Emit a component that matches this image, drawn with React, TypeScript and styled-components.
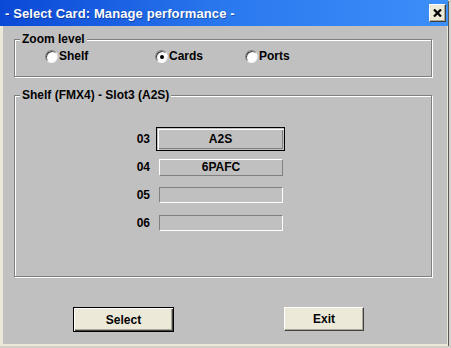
import styled, { createGlobalStyle } from "styled-components";
import { useState } from "react";

const GlobalStyle = createGlobalStyle`
  html, body {
    margin: 0;
    padding: 0;
    background: #d4d0c8;
  }
  body {
    font-family: "Liberation Sans", Arial, sans-serif;
    overflow: hidden;
  }
`;

const Window = styled.div`
  width: 448px;
  height: 346px;
  display: flex;
  flex-direction: column;
  box-shadow: 1px 1px 0 #5a5a5a;
`;

const TitleBar = styled.div`
  height: 26px;
  flex: none;
  display: flex;
  align-items: center;
  justify-content: space-between;
  padding: 0 2px 0 5px;
  background: linear-gradient(to right, #0a48d6 0%, #2a78ee 50%, #3d8ffa 100%);
`;

const TitleText = styled.span`
  color: #ffffff;
  font-weight: bold;
  font-size: 13px;
  letter-spacing: 0.1px;
  text-shadow: 1px 1px 0 rgba(0, 0, 60, 0.35);
`;

const CloseButton = styled.div`
  width: 17px;
  height: 18px;
  box-sizing: border-box;
  background: #ece9d8;
  border: 1px solid;
  border-color: #ffffff #404040 #404040 #ffffff;
  box-shadow: inset -1px -1px 0 #aca899;
  display: flex;
  align-items: center;
  justify-content: center;
`;

const Body = styled.div`
  flex: 1;
  background: #c0c0c0;
  border-left: 3px solid #ece9d8;
  border-right: 1px solid #ece9d8;
  border-bottom: 2px solid #ece9d8;
  padding: 13px 15px 0 11px;
  display: flex;
  flex-direction: column;
`;

interface GroupProps {
  $height: number;
  $gap?: number;
}

const Group = styled.div<GroupProps>`
  position: relative;
  height: ${({ $height }) => $height}px;
  box-sizing: border-box;
  margin-top: ${({ $gap = 0 }) => $gap}px;
  border: 1px solid #808080;
  box-shadow: 1px 1px 0 #ffffff, inset 1px 1px 0 #ffffff;
`;

const Legend = styled.span`
  position: absolute;
  top: -8px;
  left: 5px;
  padding: 0 2px;
  background: #c0c0c0;
  font-size: 12px;
  line-height: 14px;
  font-weight: bold;
  color: #000;
`;

const RadioRow = styled.div`
  display: flex;
  align-items: center;
  padding: 9px 0 0 30px;
  height: 14px;
`;

interface RadioItemProps {
  $width?: number;
}

const RadioItem = styled.label<RadioItemProps>`
  display: flex;
  align-items: center;
  gap: 1px;
  width: ${({ $width }) => ($width ? `${$width}px` : "auto")};
  font-size: 12px;
  font-weight: bold;
  color: #000;
  cursor: pointer;
`;

const RadioCircle = styled.span`
  width: 13px;
  height: 13px;
  box-sizing: border-box;
  border-radius: 50%;
  background: #ffffff;
  border: 1px solid;
  border-color: #808080 #e8e8e8 #ffffff #808080;
  box-shadow: inset 1px 1px 0 #404040;
  display: flex;
  align-items: center;
  justify-content: center;
`;

const RadioDot = styled.span`
  width: 4px;
  height: 4px;
  border-radius: 50%;
  background: #000;
  margin: 1px 0 0 1px;
`;

const SlotList = styled.div`
  display: flex;
  flex-direction: column;
  padding: 29px 0 0 105px;
`;

const SlotRow = styled.div`
  display: flex;
  align-items: center;
  height: 28px;
`;

const SlotLabel = styled.span`
  width: 30px;
  text-align: right;
  font-size: 12px;
  font-weight: bold;
  color: #000;
  margin-right: 6px;
`;

interface SlotBoxProps {
  $kind: "focused" | "filled" | "empty";
}

const SlotBox = styled.div<SlotBoxProps>`
  box-sizing: border-box;
  display: flex;
  align-items: center;
  justify-content: center;
  font-size: 12px;
  font-weight: bold;
  color: #000;
  ${({ $kind }) =>
    $kind === "focused"
      ? `
    width: 129px;
    height: 24px;
    border: 1px solid #000;
    box-shadow: inset 1px 1px 0 #c0c0c0, inset 2px 2px 0 #ffffff,
      inset -1px -1px 0 #c0c0c0, inset -2px -2px 0 #808080;
  `
      : $kind === "filled"
      ? `
    width: 124px;
    height: 17px;
    margin-left: 3px;
    border: 1px solid;
    border-color: #ffffff #808080 #808080 #ffffff;
  `
      : `
    width: 124px;
    height: 16px;
    margin-left: 3px;
    border: 1px solid;
    border-color: #808080 #ffffff #ffffff #808080;
  `}
`;

const ButtonRow = styled.div`
  display: flex;
  align-items: flex-start;
  margin-top: 30px;
  padding-left: 59px;
  gap: 110px;
`;

interface DialogButtonProps {
  $width: number;
  $default?: boolean;
}

const DialogButton = styled.button<DialogButtonProps>`
  width: ${({ $width }) => $width}px;
  height: ${({ $default }) => ($default ? 25 : 24)}px;
  box-sizing: border-box;
  background: #ece9d8;
  font-family: "Liberation Sans", Arial, sans-serif;
  font-size: 12px;
  font-weight: bold;
  color: #000;
  padding: 0;
  cursor: pointer;
  border: 1px solid ${({ $default }) => ($default ? "#000" : "transparent")};
  box-shadow: ${({ $default }) =>
    $default
      ? "inset 1px 1px 0 #ffffff, inset -1px -1px 0 #404040, inset -2px -2px 0 #aca899"
      : "inset 1px 1px 0 #ffffff, inset -1px -1px 0 #404040, inset -2px -2px 0 #aca899"};
  ${({ $default }) =>
    $default
      ? ""
      : `border-color: #ffffff #404040 #404040 #ffffff; box-shadow: inset -1px -1px 0 #aca899;`}
`;

const slots = [
  { id: "03", name: "A2S" },
  { id: "04", name: "6PAFC" },
  { id: "05", name: "" },
  { id: "06", name: "" },
];

const levels = [
  { key: "shelf", label: "Shelf", width: 110 },
  { key: "cards", label: "Cards", width: 90 },
  { key: "ports", label: "Ports" },
];

const App = () => {
  const [level, setLevel] = useState("cards");

  return (
    <>
      <GlobalStyle />
      <Window>
        <TitleBar>
          <TitleText>- Select Card: Manage performance -</TitleText>
          <CloseButton>
            <svg width="9" height="8" viewBox="0 0 9 8">
              <path d="M1 0.5 L8 7.5 M8 0.5 L1 7.5" stroke="#000" strokeWidth="2.2" />
            </svg>
          </CloseButton>
        </TitleBar>
        <Body>
          <Group $height={38}>
            <Legend>Zoom level</Legend>
            <RadioRow>
              {levels.map((item) => (
                <RadioItem
                  key={item.key}
                  $width={item.width}
                  onClick={() => setLevel(item.key)}
                >
                  <RadioCircle>{level === item.key ? <RadioDot /> : null}</RadioCircle>
                  {item.label}
                </RadioItem>
              ))}
            </RadioRow>
          </Group>

          <Group $height={182} $gap={18}>
            <Legend>Shelf (FMX4) - Slot3 (A2S)</Legend>
            <SlotList>
              {slots.map((slot, index) => (
                <SlotRow key={slot.id}>
                  <SlotLabel>{slot.id}</SlotLabel>
                  <SlotBox
                    $kind={index === 0 ? "focused" : slot.name ? "filled" : "empty"}
                  >
                    {slot.name}
                  </SlotBox>
                </SlotRow>
              ))}
            </SlotList>
          </Group>

          <ButtonRow>
            <DialogButton $width={101} $default>
              Select
            </DialogButton>
            <DialogButton $width={80}>Exit</DialogButton>
          </ButtonRow>
        </Body>
      </Window>
    </>
  );
};

export default App;
